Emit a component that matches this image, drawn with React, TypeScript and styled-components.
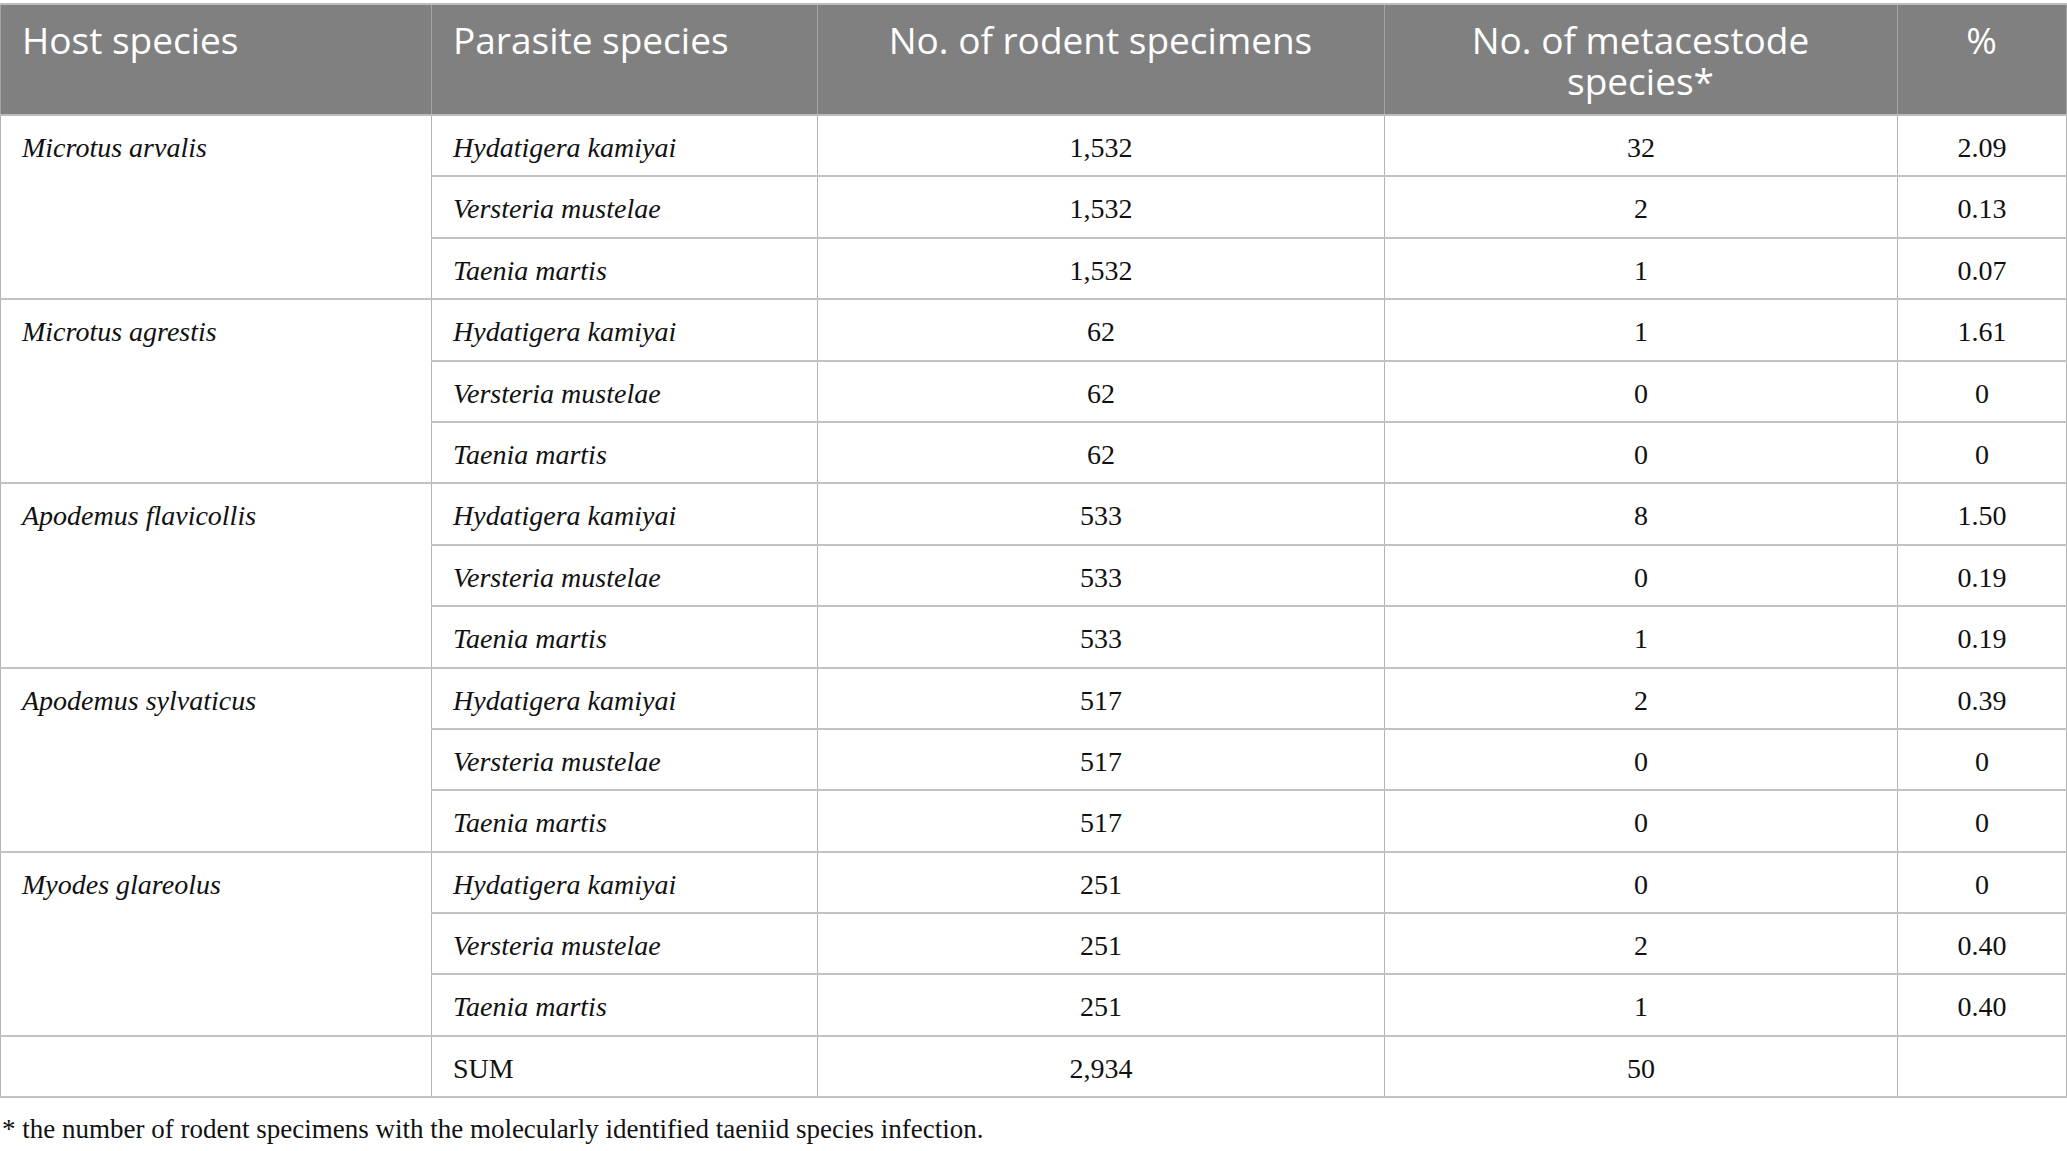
import React from "react";
import styled, { createGlobalStyle } from "styled-components";

const GlobalStyle = createGlobalStyle`
	html, body {
		margin: 0;
		padding: 0;
		background: #ffffff;
	}
`;

const Page = styled.div`
	width: 2067px;
	padding-top: 3px;
`;

const Table = styled.table`
	width: 2066px;
	border-collapse: collapse;
	table-layout: fixed;
	border: 2px solid #bdbdbd;
	border-left-width: 1px;
	border-right-width: 1px;
`;

const HeadRow = styled.tr`
	background-color: #7f807f;
`;

const HeadCell = styled.th<{ $align?: string }>`
	font-family: "Open Sans", "Noto Sans", sans-serif;
	font-weight: 400;
	font-size: 37px;
	line-height: 41px;
	color: #ffffff;
	text-align: ${(p) => p.$align || "left"};
	vertical-align: top;
	padding: 14px 22px 13px 21px;
	height: 82px;
	border-left: 1px solid #a4a4a4;
	border-right: 1px solid #a4a4a4;
	border-bottom: 2px solid #bdbdbd;
`;

const HeadLine = styled.span`
	display: block;
`;

const Cell = styled.td<{ $align?: string; $italic?: boolean }>`
	font-family: "Liberation Serif", "Times New Roman", serif;
	font-size: 28px;
	line-height: 32px;
	color: #111111;
	font-style: ${(p) => (p.$italic ? "italic" : "normal")};
	text-align: ${(p) => p.$align || "left"};
	vertical-align: top;
	padding: 16px 21px 11.4px 21px;
	border: 1px solid #b3b3b3;
	border-top: 2px solid #c2c2c2;
	border-bottom: 2px solid #c2c2c2;
`;

const Footnote = styled.p`
	margin: 15px 0 0 2px;
	font-family: "Liberation Serif", "Times New Roman", serif;
	font-size: 27px;
	line-height: 32px;
	color: #111111;
`;

type Entry = { parasite: string; rodents: string; count: string; pct: string };
type Group = { host: string; entries: Entry[] };

const parasites = ["Hydatigera kamiyai", "Versteria mustelae", "Taenia martis"];

const build = (host: string, rodents: string, counts: string[], pcts: string[]): Group => ({
	host,
	entries: parasites.map((parasite, i) => ({
		parasite,
		rodents,
		count: counts[i],
		pct: pcts[i],
	})),
});

const groups: Group[] = [
	build("Microtus arvalis", "1,532", ["32", "2", "1"], ["2.09", "0.13", "0.07"]),
	build("Microtus agrestis", "62", ["1", "0", "0"], ["1.61", "0", "0"]),
	build("Apodemus flavicollis", "533", ["8", "0", "1"], ["1.50", "0.19", "0.19"]),
	build("Apodemus sylvaticus", "517", ["2", "0", "0"], ["0.39", "0", "0"]),
	build("Myodes glareolus", "251", ["0", "2", "1"], ["0", "0.40", "0.40"]),
];

const App = () => {
	return (
		<Page>
			<GlobalStyle />
			<Table>
				<colgroup>
					<col style={{ width: 431 }} />
					<col style={{ width: 386 }} />
					<col style={{ width: 567 }} />
					<col style={{ width: 513 }} />
					<col style={{ width: 169 }} />
				</colgroup>
				<thead>
					<HeadRow>
						<HeadCell>Host species</HeadCell>
						<HeadCell>Parasite species</HeadCell>
						<HeadCell $align="center">No. of rodent specimens</HeadCell>
						<HeadCell $align="center">
							<HeadLine>No. of metacestode</HeadLine>
							<HeadLine>species*</HeadLine>
						</HeadCell>
						<HeadCell $align="center">%</HeadCell>
					</HeadRow>
				</thead>
				<tbody>
					{groups.map((g) =>
						g.entries.map((e, i) => (
							<tr key={g.host + e.parasite}>
								{i === 0 && (
									<Cell $italic rowSpan={g.entries.length}>
										{g.host}
									</Cell>
								)}
								<Cell $italic>{e.parasite}</Cell>
								<Cell $align="center">{e.rodents}</Cell>
								<Cell $align="center">{e.count}</Cell>
								<Cell $align="center">{e.pct}</Cell>
							</tr>
						))
					)}
					<tr>
						<Cell></Cell>
						<Cell>SUM</Cell>
						<Cell $align="center">2,934</Cell>
						<Cell $align="center">50</Cell>
						<Cell></Cell>
					</tr>
				</tbody>
			</Table>
			<Footnote>
				* the number of rodent specimens with the molecularly identified taeniid species infection.
			</Footnote>
		</Page>
	);
};

export default App;
